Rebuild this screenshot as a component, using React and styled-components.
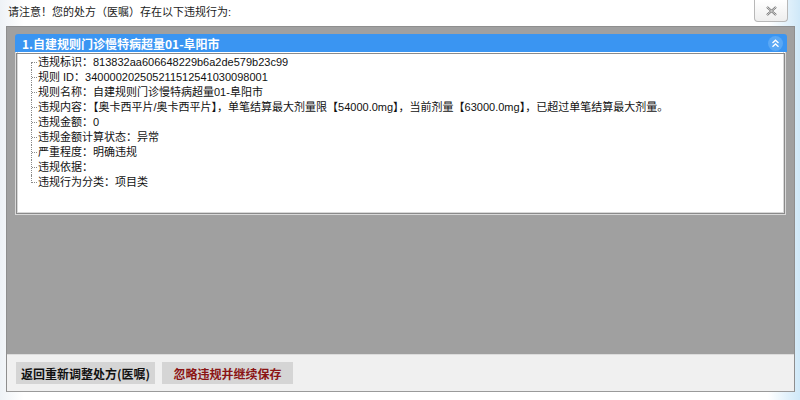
import React from "react";
import styled, { createGlobalStyle } from "styled-components";

const Global = createGlobalStyle`
  html, body { margin: 0; padding: 0; background: #ffffff; }
  body { font-family: "Liberation Sans", "Noto Sans CJK SC", sans-serif; }
`;

const Window = styled.div`
  width: 800px;
  height: 400px;
  box-sizing: border-box;
  display: flex;
  flex-direction: column;
  background: linear-gradient(90deg, #eef2f6 0%, #ffffff 3%, #ffffff 96%, #cfe8f8 100%);
  padding: 0 5px 8px 6px;
`;

const TitleBar = styled.div`
  height: 26px;
  display: flex;
  align-items: flex-start;
  justify-content: space-between;
`;

const TitleText = styled.div`
  font-size: 11px;
  line-height: 14px;
  color: #222;
  padding: 5px 0 0 2px;
`;

const CloseButton = styled.div`
  width: 34px;
  height: 22px;
  margin-right: 7px;
  box-sizing: border-box;
  border: 1px solid #b8b8b8;
  border-top: none;
  border-radius: 0 0 4px 4px;
  background: linear-gradient(#ffffff, #eeeeee);
  display: flex;
  align-items: center;
  justify-content: center;
`;

const Panel = styled.div`
  flex: 1;
  display: flex;
  flex-direction: column;
  border: 1px solid #8e8e8e;
  border-bottom-color: #9a9a9a;
`;

const GrayArea = styled.div`
  flex: 1;
  background: #a0a0a0;
  padding: 7px 7px 0 8px;
`;

const Header = styled.div`
  height: 18px;
  background: #3a95f2;
  border-radius: 3px 3px 0 0;
  display: flex;
  align-items: center;
  justify-content: space-between;
  padding: 0 4px 0 7px;
  color: #fff;
  font-size: 12px;
  font-weight: bold;
  font-family: "Noto Sans CJK SC", sans-serif;
`;

const Toggle = styled.div`
  width: 15px;
  height: 15px;
  border-radius: 50%;
  background: #5aa8f5;
  display: flex;
  align-items: center;
  justify-content: center;
`;

const Body = styled.div`
  background: #fff;
  margin-right: 1px;
  height: 163px;
  box-sizing: border-box;
  border: 3px double #d8d8d8;
  border-top: none;
  outline: 1px solid #8a8a8a;
  outline-offset: -2px;
  padding: 3px 0 0 10px;
`;

const TreeList = styled.div`
  display: flex;
  flex-direction: column;
`;

const Node = styled.div`
  position: relative;
  height: 15px;
  line-height: 15px;
  display: flex;
  align-items: center;
  padding-left: 10px;
  font-size: 11px;
  color: #111;
  white-space: nowrap;
  &::before {
    content: "";
    position: absolute;
    left: 3px;
    top: ${(p) => (p.$first ? "7px" : "0")};
    height: ${(p) => (p.$last || p.$first ? "8px" : "15px")};
    border-left: 1px dotted #8a8a8a;
  }
  &::after {
    content: "";
    position: absolute;
    left: 4px;
    top: 7px;
    width: 5px;
    border-top: 1px dotted #8a8a8a;
  }
`;

const Footer = styled.div`
  height: 36px;
  background: #f0f0f0;
  border-top: 1px solid #dcdcdc;
  display: flex;
  align-items: center;
  gap: 7px;
  padding-left: 9px;
`;

const Button = styled.div`
  height: 22px;
  width: ${(p) => p.$w}px;
  background: #d5d5d5;
  display: flex;
  align-items: center;
  justify-content: center;
  font-size: 12px;
  font-weight: bold;
  font-family: "Noto Sans CJK SC", sans-serif;
  color: ${(p) => p.$color};
`;

const rows = [
  "违规标识：813832aa606648229b6a2de579b23c99",
  "规则 ID：340000202505211512541030098001",
  "规则名称：自建规则门诊慢特病超量01-阜阳市",
  "违规内容：【奥卡西平片/奥卡西平片】，单笔结算最大剂量限【54000.0mg】，当前剂量【63000.0mg】，已超过单笔结算最大剂量。",
  "违规金额：0",
  "违规金额计算状态：异常",
  "严重程度：明确违规",
  "违规依据：",
  "违规行为分类：项目类",
];

export default function App() {
  return (
    <>
      <Global />
      <Window>
        <TitleBar>
          <TitleText>请注意！您的处方（医嘱）存在以下违规行为:</TitleText>
          <CloseButton>
            <svg width="11" height="10" viewBox="0 0 11 10">
              <path d="M1 1 L10 9 M10 1 L1 9" stroke="#6e6e6e" strokeWidth="2.2" fill="none" />
              <path d="M1 1 L10 9 M10 1 L1 9" stroke="#f4f4f4" strokeWidth="0.8" fill="none" />
            </svg>
          </CloseButton>
        </TitleBar>
        <Panel>
          <GrayArea>
            <Header>
              <span>1.自建规则门诊慢特病超量01-阜阳市</span>
              <Toggle>
                <svg width="9" height="9" viewBox="0 0 9 9">
                  <path d="M1.5 4 L4.5 1.2 L7.5 4 M1.5 7.8 L4.5 5 L7.5 7.8" stroke="#fff" strokeWidth="1.3" fill="none" />
                </svg>
              </Toggle>
            </Header>
            <Body>
              <TreeList>
                {rows.map((r, i) => (
                  <Node key={i} $first={i === 0} $last={i === rows.length - 1}>
                    {r}
                  </Node>
                ))}
              </TreeList>
            </Body>
          </GrayArea>
          <Footer>
            <Button $w={139} $color="#111">返回重新调整处方(医嘱)</Button>
            <Button $w={131} $color="#8b1414">忽略违规并继续保存</Button>
          </Footer>
        </Panel>
      </Window>
    </>
  );
}
